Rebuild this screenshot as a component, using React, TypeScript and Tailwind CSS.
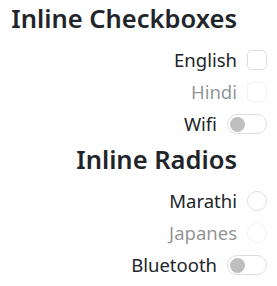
const font = "font-['Segoe_UI','Noto_Sans','Open_Sans',sans-serif]";

function Checkbox({ disabled }: { disabled?: boolean }) {
  return (
    <span
      className={`inline-block w-5 h-5 rounded-[5px] border bg-white ${
        disabled ? 'border-[#eff1f3]' : 'border-[#dcdfe2]'
      }`}
    />
  );
}

function Radio({ disabled }: { disabled?: boolean }) {
  return (
    <span
      className={`inline-block w-5 h-5 rounded-full border bg-white ${
        disabled ? 'border-[#eff1f3]' : 'border-[#dcdfe2]'
      }`}
    />
  );
}

function Switch() {
  return (
    <span className="relative inline-flex items-center w-10 h-5 rounded-full border border-[#dcdfe2] bg-white">
      <span className="absolute left-[2px] w-[15px] h-[15px] rounded-full bg-[#bfbfbf]" />
    </span>
  );
}

function Row({
  label,
  disabled,
  children,
}: {
  label: string;
  disabled?: boolean;
  children: React.ReactNode;
}) {
  return (
    <div className="flex items-center justify-end h-[32px] pb-[2px] gap-[10px]">
      <span className={`text-[18.5px] leading-[30px] ${disabled ? 'text-[#212529]/50' : 'text-[#212529]'}`}>
        {label}
      </span>
      {children}
    </div>
  );
}

export default function App() {
  return (
    <div className={`${font} w-[277px] h-[286px] bg-white pr-[10px] flex flex-col items-end`}>
      {/* Checkboxes */}
      <h3 className="text-[25.5px] font-semibold leading-[36px] mb-[9px] mr-[30px] text-[#212529]">
        Inline Checkboxes
      </h3>
      <div className="w-full">
        <Row label="English">
          <Checkbox />
        </Row>
        <Row label="Hindi" disabled>
          <Checkbox disabled />
        </Row>
        <Row label="Wifi">
          <Switch />
        </Row>
      </div>

      {/* Radios */}
      <h3 className="text-[25.5px] font-semibold leading-[36px] mb-[9px] mr-[30px] text-[#212529]">
        Inline Radios
      </h3>
      <div className="w-full">
        <Row label="Marathi">
          <Radio />
        </Row>
        <Row label="Japanes" disabled>
          <Radio disabled />
        </Row>
        <Row label="Bluetooth">
          <Switch />
        </Row>
      </div>
    </div>
  );
}
